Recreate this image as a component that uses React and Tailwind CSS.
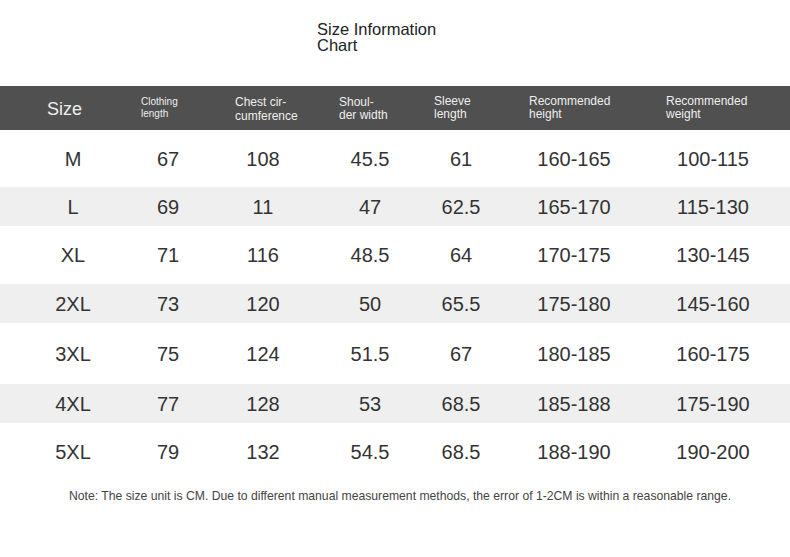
const headers = [
  { label: 'Size', cls: 'text-[18px] leading-[20px] pt-[2px]' },
  { label: ['Clothing', 'length'], cls: 'text-[10px] leading-[12px]' },
  { label: ['Chest cir-', 'cumference'], cls: 'text-[12px] leading-[14px] pt-[2px]' },
  { label: ['Shoul-', 'der width'], cls: 'text-[12px] leading-[13px] pt-[1px]' },
  { label: ['Sleeve', 'length'], cls: 'text-[12px] leading-[13px]' },
  { label: ['Recommended', 'height'], cls: 'text-[12px] leading-[13px]' },
  { label: ['Recommended', 'weight'], cls: 'text-[12px] leading-[13px]' },
];

const rows = [
  ['M', '67', '108', '45.5', '61', '160-165', '100-115'],
  ['L', '69', '11', '47', '62.5', '165-170', '115-130'],
  ['XL', '71', '116', '48.5', '64', '170-175', '130-145'],
  ['2XL', '73', '120', '50', '65.5', '175-180', '145-160'],
  ['3XL', '75', '124', '51.5', '67', '180-185', '160-175'],
  ['4XL', '77', '128', '53', '68.5', '185-188', '175-190'],
  ['5XL', '79', '132', '54.5', '68.5', '188-190', '190-200'],
];

// row heights: white rows are taller, grey bands are 39px
const heights = ['h-[57px]', 'h-[39px]', 'h-[58px]', 'h-[39px]', 'h-[61px]', 'h-[39px]', 'h-[58px]'];

function App() {
  return (
    <div
      className="w-[790px] h-[557px] bg-white text-[#333] overflow-hidden"
      style={{ fontFamily: '"Liberation Sans", Arial, sans-serif' }}
    >
      {/* title */}
      <div className="pt-[21px] pl-[317px] h-[86px]">
        <p className="text-[16.5px] leading-[16px] text-[#222]">
          Size Information
          <br />
          Chart
        </p>
      </div>

      {/* header bar */}
      <div className="h-[44px] bg-[#505050] text-[#eee] grid grid-cols-[94px_94px_104px_95px_95px_137px_1fr] pl-[47px] items-center">
        {headers.map((h, i) => (
          <div key={i} className={h.cls}>
            {Array.isArray(h.label) ? (
              <>
                {h.label[0]}
                <br />
                {h.label[1]}
              </>
            ) : (
              h.label
            )}
          </div>
        ))}
      </div>

      {/* rows */}
      <div>
        {rows.map((r, i) => (
          <div
            key={r[0]}
            className={
              'grid grid-cols-[106px_84px_106px_108px_74px_152px_126px] pl-[20px] items-center text-[20px] ' +
              heights[i] +
              (i % 2 === 1 ? ' bg-[#efefef]' : ' bg-white')
            }
          >
            {r.map((v, j) => (
              <div key={j} className="text-center">
                {v}
              </div>
            ))}
          </div>
        ))}
      </div>

      <p className="mt-[7px] text-center text-[12.2px] leading-[16px] text-[#444] pl-[10px]">
        Note: The size unit is CM. Due to different manual measurement methods, the error of 1-2CM is within a reasonable range.
      </p>
    </div>
  );
}

export default App;
